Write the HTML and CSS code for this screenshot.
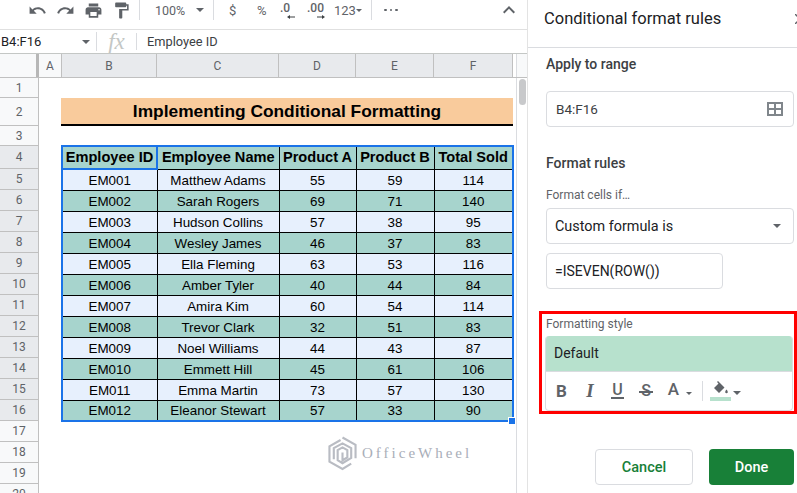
FILE: index.html
```html
<!DOCTYPE html>
<html lang="en">
<head>
  <meta charset="UTF-8">
  <title>Conditional format rules</title>
  <link rel="stylesheet" href="styles.css">
</head>
<body>
  <div class="app">
    <div class="sheet-area">
      <!-- Toolbar -->
      <div class="toolbar">
        <span class="tool"><svg class="ico" viewBox="0 0 24 24"><path d="M12.5 8c-2.65 0-5.05.99-6.9 2.6L2 7v9h9l-3.62-3.62c1.39-1.16 3.16-1.88 5.12-1.88 3.54 0 6.55 2.31 7.6 5.5l2.37-.78C21.08 11.03 17.15 8 12.5 8z"/></svg></span>
        <span class="tool"><svg class="ico" viewBox="0 0 24 24"><path d="M18.4 10.6C16.55 8.99 14.15 8 11.5 8c-4.65 0-8.58 3.03-9.96 7.22L3.9 16c1.05-3.19 4.05-5.5 7.6-5.5 1.95 0 3.73.72 5.12 1.88L13 16h9V7l-3.6 3.6z"/></svg></span>
        <span class="tool"><svg class="ico" viewBox="0 0 24 24"><path d="M19 8H5c-1.66 0-3 1.34-3 3v6h4v4h12v-4h4v-6c0-1.66-1.34-3-3-3zm-3 11H8v-5h8v5zm3-7c-.55 0-1-.45-1-1s.45-1 1-1 1 .45 1 1-.45 1-1 1zm-1-9H6v4h12V3z"/></svg></span>
        <span class="tool"><svg class="ico" viewBox="0 0 24 24"><path d="M18 4V3c0-.55-.45-1-1-1H5c-.55 0-1 .45-1 1v4c0 .55.45 1 1 1h12c.55 0 1-.45 1-1V6h1v4H9v11c0 .55.45 1 1 1h2c.55 0 1-.45 1-1v-9h8V4h-3z"/></svg></span>
        <span class="sep sep-first"></span>
        <span class="zoom-val">100%</span>
        <span class="caret caret-zoom"></span>
        <span class="sep sep-zoom"></span>
        <span class="tool-text dollar">$</span>
        <span class="tool-text percent">%</span>
        <span class="dec dec-less">.0<svg class="dec-arrow" viewBox="0 0 8 4"><path d="M0 2 3 0v1.500h5v1H3V4z"/></svg></span>
        <span class="dec dec-more">.00<svg class="dec-arrow" viewBox="0 0 8 4"><path d="M8 2 5 0v1.500H0v1h5V4z"/></svg></span>
        <span class="tool-text num">123</span>
        <span class="caret caret-num"></span>
        <span class="sep sep-num"></span>
        <span class="more"><i></i><i></i><i></i></span>
        <svg class="chevron" viewBox="0 0 12 8"><path d="M6 0 0 6l1.400 1.400L6 2.800l4.600 4.600L12 6z"/></svg>
      </div>

      <!-- Formula bar -->
      <div class="formula-bar">
        <div class="name-box">B4:F16<span class="caret"></span></div>
        <div class="fx">fx</div>
        <div class="formula-text">Employee ID</div>
      </div>

      <!-- Column headers -->
      <div class="col-heads">
        <div class="corner"></div>
        <div class="col-head col-a">A</div>
        <div class="col-head col-b on">B</div>
        <div class="col-head col-c on">C</div>
        <div class="col-head col-d on">D</div>
        <div class="col-head col-e on">E</div>
        <div class="col-head col-f on">F</div>
        <div class="col-rest"></div>
      </div>

      <div class="sheet-body">
        <div class="row-heads">
          <div class="row-head">1</div>
          <div class="row-head tall">2</div>
          <div class="row-head">3</div>
          <div class="row-head on first">4</div>
          <div class="row-head on">5</div>
          <div class="row-head on">6</div>
          <div class="row-head on">7</div>
          <div class="row-head on">8</div>
          <div class="row-head on">9</div>
          <div class="row-head on">10</div>
          <div class="row-head on">11</div>
          <div class="row-head on">12</div>
          <div class="row-head on">13</div>
          <div class="row-head on">14</div>
          <div class="row-head on">15</div>
          <div class="row-head on">16</div>
          <div class="row-head">17</div>
          <div class="row-head">18</div>
          <div class="row-head">19</div>
          <div class="row-head">20</div>
        </div>

        <div class="cells">
          <div class="sheet-title">Implementing Conditional Formatting</div>
          <table class="data">
            <colgroup>
              <col class="w-b"><col class="w-c"><col class="w-d"><col class="w-e"><col class="w-f">
            </colgroup>
            <thead>
              <tr><th class="active">Employee ID</th><th>Employee Name</th><th>Product A</th><th>Product B</th><th>Total Sold</th></tr>
            </thead>
            <tbody>
              <tr><td>EM001</td><td>Matthew Adams</td><td>55</td><td>59</td><td>114</td></tr>
              <tr><td>EM002</td><td>Sarah Rogers</td><td>69</td><td>71</td><td>140</td></tr>
              <tr><td>EM003</td><td>Hudson Collins</td><td>57</td><td>38</td><td>95</td></tr>
              <tr><td>EM004</td><td>Wesley James</td><td>46</td><td>37</td><td>83</td></tr>
              <tr><td>EM005</td><td>Ella Fleming</td><td>63</td><td>53</td><td>116</td></tr>
              <tr><td>EM006</td><td>Amber Tyler</td><td>40</td><td>44</td><td>84</td></tr>
              <tr><td>EM007</td><td>Amira Kim</td><td>60</td><td>54</td><td>114</td></tr>
              <tr><td>EM008</td><td>Trevor Clark</td><td>32</td><td>51</td><td>83</td></tr>
              <tr><td>EM009</td><td>Noel Williams</td><td>44</td><td>43</td><td>87</td></tr>
              <tr><td>EM010</td><td>Emmett Hill</td><td>45</td><td>61</td><td>106</td></tr>
              <tr><td>EM011</td><td>Emma Martin</td><td>73</td><td>57</td><td>130</td></tr>
              <tr><td>EM012</td><td>Eleanor Stewart</td><td>57</td><td>33</td><td>90</td></tr>
            </tbody>
          </table>
          <span class="fill-handle"></span>

          <!-- Watermark sits on top of the empty cells -->
          <div class="watermark">
            <svg class="wm-logo" viewBox="0 0 30 36"><path d="M15 1.500 28.500 9v14M24 28.500 15 34 1.500 26.500V10.500L13 4" /><path d="M6 24V12.500L15 7.500l9 5v10L15 28l-5-3V14.500l5-2.800 5 2.800V22l-5 3V17" /></svg>
            <span class="wm-text">OfficeWheel</span>
          </div>
        </div>

        <div class="vscroll"><div class="thumb"></div></div>
      </div>
    </div>

    <!-- Side panel -->
    <aside class="panel">
      <div class="panel-head">
        <h2 class="panel-title">Conditional format rules</h2>
        <svg class="close" viewBox="0 0 10 10"><path d="M0 0 10 10M10 0 0 10"/></svg>
      </div>

      <div class="panel-body">
        <div class="label-strong">Apply to range</div>
        <div class="field range-field">
          <span>B4:F16</span>
          <svg class="grid-ico" viewBox="0 0 16 14"><path d="M0 0h16v14H0zM2 2v4h5V2zm7 0v4h5V2zM2 8v4h5V8zm7 0v4h5V8z" fill-rule="evenodd"/></svg>
        </div>

        <div class="label-rules">Format rules</div>
        <div class="label-small">Format cells if…</div>
        <div class="field select-field">
          <span>Custom formula is</span>
          <span class="caret"></span>
        </div>
        <div class="field formula-field">=ISEVEN(ROW())</div>

        <section class="style-box">
          <div class="label-small">Formatting style</div>
          <div class="style-card">
            <div class="style-preview">Default</div>
            <div class="style-tools">
              <span class="st st-b">B</span>
              <span class="st st-i">I</span>
              <span class="st st-u">U</span>
              <span class="st st-s">S</span>
              <span class="st st-a">A</span>
              <span class="caret"></span>
              <span class="st-sep"></span>
              <span class="st-fill">
                <svg class="fill-ico" viewBox="0 0 16 13"><path d="M5 0 4 1l1.500 1.500L1 7l5 5 5.500-5.500zM13.500 8.500s-1.300 1.500-1.300 2.400a1.300 1.300 0 0 0 2.600 0c0-.9-1.300-2.400-1.300-2.400z"/></svg>
                <i class="fill-bar"></i>
              </span>
              <span class="caret"></span>
            </div>
          </div>
        </section>

        <div class="actions">
          <button type="button" class="btn-cancel">Cancel</button>
          <button type="button" class="btn-done">Done</button>
        </div>
      </div>
    </aside>
  </div>
</body>
</html>
```

FILE: styles.css
```css
html, body {
  margin: 0;
  height: 100%;
  overflow: hidden;
  background: #fff;
}
* {
  box-sizing: border-box;
}
.app {
  display: flex;
  width: 797px;
  height: 493px;
  font-family: Roboto, Arial, sans-serif;
  color: #202124;
}
.sheet-area {
  width: 527px;
  flex: none;
}
.caret {
  display: inline-block;
  width: 0;
  height: 0;
  border-left: 4px solid transparent;
  border-right: 4px solid transparent;
  border-top: 4px solid #5f6368;
}

/* Toolbar */
.toolbar {
  display: flex;
  align-items: center;
  height: 30px;
  padding: 0 0 9px 23px;
  border-bottom: 1px solid #e0e0e0;
  color: #5f6368;
}
.tool {
  width: 28px;
  height: 20px;
  display: flex;
  align-items: center;
  justify-content: center;
}
.ico {
  width: 19px;
  height: 19px;
  fill: #5f6368;
}
.sep {
  width: 1px;
  height: 20px;
  background: #dadce0;
}
.sep-first { margin-left: 4px; }
.zoom-val {
  margin-left: 15px;
  font-size: 12.500px;
  width: 30px;
}
.caret-zoom { margin-left: 11px; }
.sep-zoom { margin-left: 9px; }
.tool-text { font-size: 13px; }
.dollar { margin-left: 15px; width: 28px; }
.percent { width: 23px; }
.dec {
  font-size: 12px;
  font-weight: 500;
  line-height: 13px;
  height: 20px;
  padding-top: 2px;
}
.dec-less { width: 27px; }
.dec-more { width: 27px; }
.dec-arrow {
  display: block;
  width: 8px;
  height: 4px;
  fill: #3c4043;
  margin-left: 7px;
}
.dec-more .dec-arrow { margin-left: 10px; }
.num { width: 22px; }
.caret-num {
  border-left-width: 3.500px;
  border-right-width: 3.500px;
  border-top-width: 3.500px;
}
.sep-num { margin-left: 9px; }
.more {
  display: flex;
  gap: 3px;
  margin-left: 12px;
}
.more i {
  width: 2.500px;
  height: 2.500px;
  border-radius: 50%;
  background: #5f6368;
}
.chevron {
  width: 12px;
  height: 8px;
  margin-left: auto;
  margin-right: 12px;
  fill: #5f6368;
}

/* Formula bar */
.formula-bar {
  display: flex;
  align-items: center;
  height: 24px;
  border-bottom: 1px solid #c4c7c5;
}
.name-box {
  width: 97px;
  height: 19px;
  padding-left: 1px;
  border-right: 1px solid #dadce0;
  display: flex;
  align-items: center;
  justify-content: space-between;
  padding-right: 6px;
  font-size: 13px;
  color: #202124;
}
.fx {
  width: 39px;
  text-align: center;
  font: italic 23px/20px "Liberation Serif", serif;
  color: #c4c7c5;
}
.formula-text {
  border-left: 1px solid #dadce0;
  height: 17px;
  line-height: 17px;
  padding-left: 10px;
  font-size: 12.800px;
  color: #3c4043;
}

/* Column headers */
.col-heads {
  display: flex;
  height: 24px;
  border-bottom: 1px solid #c0c0c0;
  font-size: 12px;
  color: #5f6368;
}
.corner {
  width: 39px;
  background: #f8f9fa;
  border-right: 3px solid #b7b7b7;
}
.col-head {
  display: flex;
  align-items: center;
  justify-content: center;
  border-right: 1px solid #c0c0c0;
  background: #f8f9fa;
}
.col-head.on { background: #e8eaed; }
.col-a { width: 23px; }
.col-b { width: 95px; }
.col-c { width: 122px; }
.col-d { width: 77px; }
.col-e { width: 78px; }
.col-f { width: 79px; }
.col-rest {
  flex: 1;
  background: #f8f9fa;
  margin-left: 3px;
  border-left: 1px solid #dadce0;
}

/* Grid */
.sheet-body {
  display: flex;
  height: 415px;
  overflow: hidden;
}
.row-heads {
  width: 39px;
  flex: none;
  border-right: 1px solid #c0c0c0;
  font-size: 12px;
  color: #5f6368;
}
.row-head {
  height: 21px;
  display: flex;
  align-items: center;
  justify-content: center;
  background: #f8f9fa;
  border-bottom: 1px solid #c0c0c0;
}
.row-head:first-child, .row-head:nth-child(3) { height: 20px; }
.row-head.tall { height: 28px; }
.row-head.first { height: 23px; }
.row-head.on { background: #e8eaed; }
.cells {
  position: relative;
  width: 474px;
  padding: 20px 0 0 22px;
}
.sheet-title {
  width: 452px;
  height: 28px;
  background: #f9cb9c;
  border-bottom: 2px solid #000;
  text-align: center;
  font: bold 17.350px/26px "Liberation Sans", Arial, sans-serif;
  color: #000;
}
.data {
  margin-top: 19px;
  border-collapse: collapse;
  table-layout: fixed;
  width: 452px;
  border: 2px solid #1a73e8;
  font-family: "Liberation Sans", Arial, sans-serif;
  color: #000;
}
.w-b { width: 95px; }
.w-c { width: 122px; }
.w-d { width: 77px; }
.w-e { width: 78px; }
.w-f { width: 79px; }
.data th, .data td {
  padding: 0;
  border: 1px solid #000;
  text-align: center;
  white-space: nowrap;
}
.data th {
  height: 23px;
  padding-bottom: 1px;
  font-size: 14.600px;
  font-weight: bold;
  background: #a7d4cd;
}
.data th.active { border: 2px solid #1a73e8; }
.data td {
  height: 21px;
  padding-top: 1px;
  font-size: 13.400px;
  background: #e7f0fd;
}
.data tbody tr:nth-child(even) td { background: #a7d4cd; }
.fill-handle {
  position: absolute;
  left: 469px;
  top: 339px;
  width: 8px;
  height: 8px;
  background: #1a73e8;
  border: 1px solid #fff;
}

/* Watermark */
.watermark {
  position: absolute;
  left: 289px;
  top: 358px;
  display: flex;
  align-items: center;
  gap: 5px;
}
.wm-logo {
  width: 29px;
  height: 35px;
  fill: none;
  stroke: #b9bcc3;
  stroke-width: 2.200;
}
.wm-text {
  font: 15px "Liberation Serif", serif;
  letter-spacing: 3px;
  color: #a9aeb8;
}

/* Sheet scrollbar */
.vscroll {
  width: 14px;
  margin-left: 3px;
  border-left: 1px solid #dadce0;
  padding: 1px 1px 0 2px;
}
.thumb {
  height: 26px;
  border-radius: 4px;
  background: #c8c9cb;
}

/* Side panel */
.panel {
  width: 270px;
  flex: none;
  border-left: 1px solid #e3e3e3;
  overflow: hidden;
}
.panel-head {
  position: relative;
  height: 48px;
  border-bottom: 1px solid #dadce0;
  padding: 9px 0 0 16px;
}
.panel-title {
  margin: 0;
  font-size: 16.500px;
  font-weight: 400;
  line-height: 20px;
}
.close {
  position: absolute;
  left: 267px;
  top: 14px;
  width: 10px;
  height: 10px;
  stroke: #5f6368;
  stroke-width: 1.500;
}
.panel-body {
  padding: 8px 3px 0 18px;
}
.label-strong {
  font-size: 14px;
  font-weight: 500;
  line-height: 16px;
  color: #3c4043;
}
.field {
  display: flex;
  align-items: center;
  height: 36px;
  border: 1px solid #dadce0;
  border-radius: 4px;
  font-size: 14.400px;
  color: #202124;
}
.range-field {
  margin-top: 19px;
  padding: 0 10px 0 9px;
  justify-content: space-between;
  font-size: 13.500px;
  color: #3c4043;
}
.grid-ico {
  width: 16px;
  height: 14px;
  fill: #80868b;
}
.label-rules {
  margin-top: 27px;
  font-size: 14px;
  font-weight: 500;
  line-height: 18px;
  color: #3c4043;
}
.label-small {
  font-size: 12px;
  line-height: 14px;
  color: #5f6368;
}
.label-rules + .label-small { margin-top: 16px; }
.select-field {
  margin-top: 6px;
  padding: 0 12px 0 8px;
  justify-content: space-between;
}
.formula-field {
  margin-top: 9px;
  width: 177px;
  padding-left: 8px;
  font-size: 14px;
}

/* Formatting style box, red outline from the original annotation */
.style-box {
  margin: 22px -3px 0 -7px;
  height: 103px;
  border: 3px solid #f00;
  padding: 3px 0 0 4px;
}
.style-card {
  margin: 5px 0 0 -1px;
  width: 248px;
  border: 1px solid #dadce0;
  border-top: 0;
  border-radius: 4px;
  overflow: hidden;
}
.style-preview {
  height: 35px;
  line-height: 35px;
  padding-left: 8px;
  background: #b7e1cd;
  font-size: 14px;
}
.style-tools {
  display: flex;
  align-items: center;
  height: 39px;
  padding-left: 10px;
  border-top: 1px solid #dadce0;
  color: #5f6368;
}
.st {
  line-height: 18px;
  text-align: center;
}
.st-b { width: 11px; font-weight: 700; font-size: 17px; }
.st-i {
  width: 12px;
  margin-left: 17px;
  font: italic bold 19px/18px "Liberation Serif", serif;
}
.st-u {
  width: 13px;
  margin-left: 15px;
  border-bottom: 2px solid #5f6368;
  font-size: 16px;
  line-height: 14px;
  font-weight: 500;
}
.st-s {
  position: relative;
  width: 14px;
  margin-left: 15px;
  font-size: 16px;
  font-weight: 500;
}
.st-s::after {
  content: "";
  position: absolute;
  left: 0;
  right: 0;
  top: 9px;
  height: 2px;
  background: #5f6368;
}
.st-a {
  width: 13px;
  margin-left: 14px;
  margin-top: -4px;
  font-size: 17px;
  font-weight: 500;
}
.st-a + .caret {
  margin: 4px 0 0 6px;
  border-left-width: 3px;
  border-right-width: 3px;
  border-top-width: 3px;
}
.st-sep {
  width: 1px;
  height: 20px;
  margin-left: 10px;
  background: #dadce0;
}
.st-fill {
  width: 21px;
  margin-left: 7px;
  display: flex;
  flex-direction: column;
  align-items: center;
}
.fill-ico {
  width: 16px;
  height: 13px;
  fill: #5f6368;
}
.fill-bar {
  width: 21px;
  height: 4px;
  margin-top: 3px;
  background: #b7e1cd;
}
.st-fill + .caret { margin: 4px 0 0 2px; }

/* Buttons */
.actions {
  display: flex;
  justify-content: flex-end;
  gap: 16px;
  margin-top: 35px;
}
.actions button {
  height: 36px;
  border-radius: 4px;
  font-family: Roboto, Arial, sans-serif;
  font-size: 14.500px;
  font-weight: 500;
  cursor: pointer;
}
.btn-cancel {
  width: 98px;
  background: #fff;
  border: 1px solid #dadce0;
  color: #188038;
}
.btn-done {
  width: 85px;
  background: #188038;
  border: none;
  color: #fff;
}
```
